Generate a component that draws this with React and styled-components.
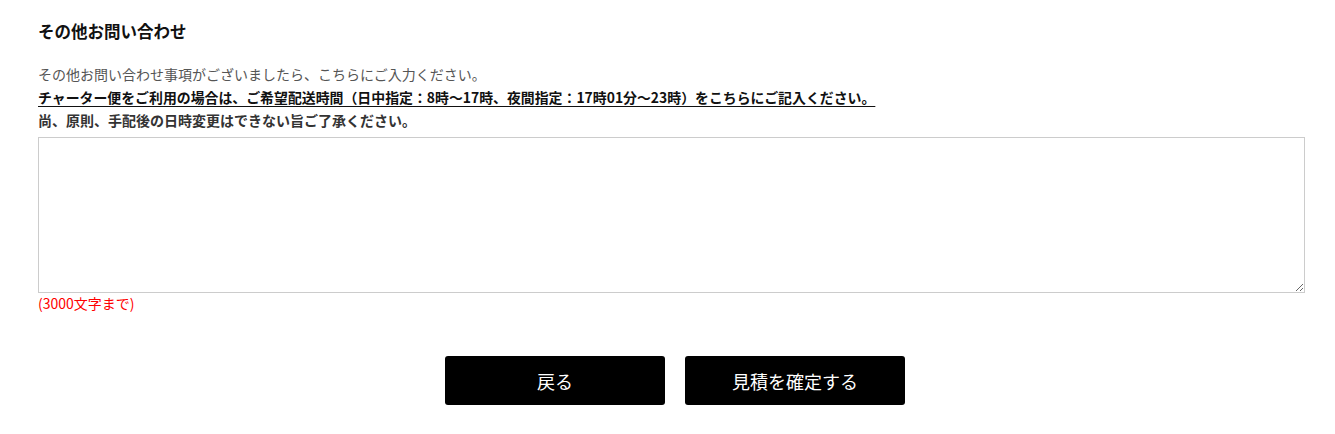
import styled, { createGlobalStyle } from "styled-components"

const GlobalStyle = createGlobalStyle`
    body{
        margin: 0;
        background: #fff;
        font-family: "Noto Sans CJK JP", "Noto Sans", sans-serif;
        color: #333;
    }
`

export default function App(){
    return(
        <>
            <GlobalStyle/>
            <Section>
                <Title>その他お問い合わせ</Title>
                <Notes>
                    <p className="plain">その他お問い合わせ事項がございましたら、こちらにご入力ください。</p>
                    <p className="strong under">チャーター便をご利用の場合は、ご希望配送時間（日中指定：8時〜17時、夜間指定：17時01分〜23時）をこちらにご記入ください。</p>
                    <p className="strong">尚、原則、手配後の日時変更はできない旨ご了承ください。</p>
                </Notes>
                <TextBox/>
                <Limit>(3000文字まで)</Limit>
                <Buttons>
                    <ActionButton>戻る</ActionButton>
                    <ActionButton>見積を確定する</ActionButton>
                </Buttons>
            </Section>
        </>
    )
}

const Section = styled.div`
    padding: 19px 30px 0 38px;
`

const Title = styled.h2`
    margin: 0;
    font-size: 16.5px;
    font-weight: 700;
    line-height: 24px;
    color: #111;
`

const Notes = styled.div`
    margin-top: 20px;

    p{
        margin: 0;
        font-size: 14px;
        line-height: 23px;
        white-space: nowrap;
    }
    .plain{
        color: #555;
    }
    .strong{
        font-weight: 700;
        color: #333;
    }
    .under{
        color: #111;
        font-size: 13.9px;
        text-decoration: underline;
        text-underline-offset: 3px;
    }
`

const TextBox = styled.textarea`
    display: block;
    box-sizing: border-box;
    width: 100%;
    height: 156px;
    margin-top: 5px;
    border: 1px solid #ccc;
    border-radius: 0;
    font-family: inherit;
`

const Limit = styled.div`
    margin-top: 0;
    font-size: 14px;
    line-height: 20px;
    color: #f00;
`

const Buttons = styled.div`
    display: flex;
    justify-content: center;
    gap: 20px;
    margin-top: 43px;
    padding-left: 7px;
`

const ActionButton = styled.button`
    width: 220px;
    height: 49px;
    border: none;
    border-radius: 3px;
    background: #000;
    color: #fff;
    font-family: inherit;
    font-size: 18px;
    cursor: pointer;
`
